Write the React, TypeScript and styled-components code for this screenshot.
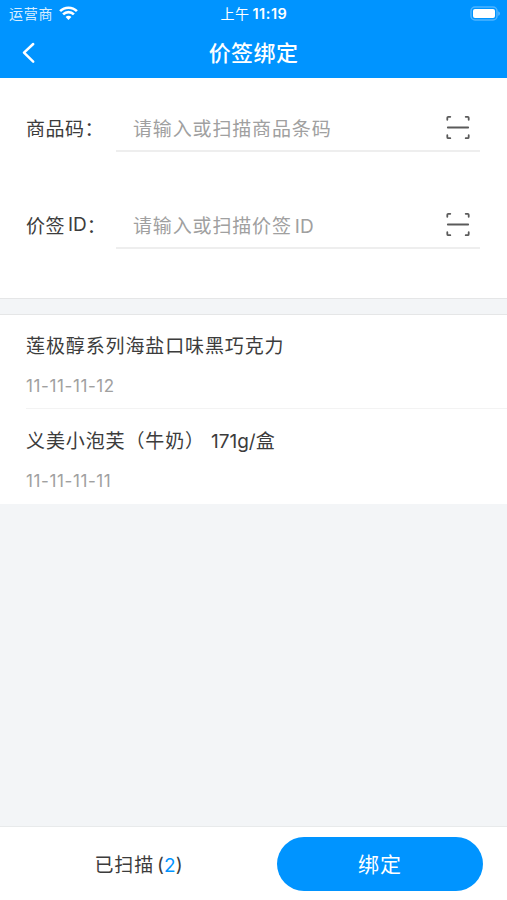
import React from "react";
import styled, { createGlobalStyle } from "styled-components";

const BLUE = "#0094ff";

const GlobalStyle = createGlobalStyle`
  * { box-sizing: border-box; }
  body {
    margin: 0;
    background: #f3f5f7;
    font-family: Inter, "Noto Sans CJK SC", sans-serif;
    color: #3c3c3c;
  }
`;

const Screen = styled.div`
  width: 507px;
  height: 900px;
  display: flex;
  flex-direction: column;
  overflow: hidden;
`;

const Header = styled.header`
  height: 78px;
  flex: none;
  background: ${BLUE};
  color: #fff;
`;

const StatusBar = styled.div`
  height: 27px;
  display: grid;
  grid-template-columns: 1fr auto 1fr;
  align-items: center;
  padding: 0 6px 0 9px;
  font-size: 14px;
  line-height: 27px;
`;

const Carrier = styled.div`
  display: flex;
  align-items: center;
  gap: 6px;
  letter-spacing: 0.8px;
  color: #d9efff;
  svg { display: block; }
`;

const Clock = styled.div`
  display: flex;
  gap: 3px;
  margin-right: 2px;
  font-size: 14px;
  font-weight: 400;
  letter-spacing: 0.4px;
`;

const ClockDigits = styled.span`
  font-size: 14.5px;
  font-weight: 600;
  letter-spacing: 0.55px;
`;

const BatterySlot = styled.div`
  display: flex;
  justify-content: flex-end;
`;

const NavBar = styled.div`
  height: 51px;
  display: grid;
  grid-template-columns: 60px 1fr 60px;
  align-items: center;
`;

const BackButton = styled.button`
  width: 40px;
  height: 40px;
  margin: 0 0 0 8px;
  padding: 0;
  display: flex;
  align-items: center;
  justify-content: center;
  border: 0;
  background: none;
  color: #fff;
`;

const Title = styled.h1`
  margin: 0;
  font-size: 22px;
  font-weight: 500;
  letter-spacing: 0.4px;
  line-height: 50px;
  text-align: center;
`;

const Form = styled.section`
  flex: none;
  height: 221px;
  padding: 25px 27px 0 26px;
  background: #fff;
  border-bottom: 1px solid #e5e6e7;
`;

const Field = styled.label`
  display: flex;
  height: 49px;
  margin-bottom: 48px;
`;

const Label = styled.span`
  width: 90px;
  display: flex;
  align-items: center;
  padding-bottom: 1px;
  font-size: 19px;
  letter-spacing: 0.5px;
  white-space: nowrap;
`;

const Colon = styled.span`
  flex: none;
`;

const LatinText = styled.span`
  margin-left: 3px;
  letter-spacing: 0;
`;

const InputRow = styled.span`
  flex: 1;
  display: flex;
  align-items: center;
  justify-content: space-between;
  padding: 0 9px 0 17px;
  border-bottom: 2px solid #eeeeee;
`;

const Placeholder = styled.span`
  padding-top: 1px;
  font-size: 19px;
  letter-spacing: 0.85px;
  color: #a0a0a0;
`;

const List = styled.section`
  flex: none;
  height: 190px;
  margin-top: 15px;
  background: #fff;
  border-top: 1px solid #e5e6e7;
`;

const Item = styled.article`
  height: 93px;
  margin-left: 26px;
  padding-top: 17px;
  & + & { padding-top: 18px; border-top: 1px solid #f3f3f3; }
`;

const ItemName = styled.div`
  font-size: 19px;
  letter-spacing: 0.88px;
  line-height: 30px;
  white-space: pre;
`;

const Weight = styled.span`
  margin-left: 6px;
  letter-spacing: 0;
`;

const ItemCode = styled.div`
  margin-top: 12px;
  font-size: 17px;
  letter-spacing: 0.6px;
  line-height: 24px;
  color: #a0a0a0;
`;

const Footer = styled.footer`
  height: 74px;
  margin-top: auto;
  padding: 0 24px 0 0;
  display: flex;
  align-items: center;
  background: #fff;
  border-top: 1px solid #e8eaeb;
`;

const Scanned = styled.div`
  flex: 1;
  padding-bottom: 1px;
  text-align: center;
  font-size: 19px;
  letter-spacing: 0.9px;
  em { margin-left: 3px; font-style: normal; letter-spacing: 0; }
  b { color: ${BLUE}; font-weight: 400; }
`;

const BindButton = styled.button`
  width: 206px;
  height: 54px;
  padding: 0 0 2px;
  border: 0;
  border-radius: 27px;
  background: ${BLUE};
  color: #fff;
  font: 400 21px Inter, "Noto Sans CJK SC", sans-serif;
  letter-spacing: 1px;
`;

const WifiIcon = () => (
  <svg width="19" height="15" viewBox="0 0 19 15" fill="none" stroke="#fff" strokeWidth="2.6">
    <path d="M1.1 5.2C5.7.5 13.3.5 17.9 5.2" />
    <path d="M4.1 8.4c3-3 7.8-3 10.8 0" />
    <path d="M6.6 10.9c1.6-1.6 4.2-1.6 5.8 0L9.5 13.9z" fill="#fff" stroke="none" />
  </svg>
);

const BatteryIcon = () => (
  <svg width="32" height="15" viewBox="0 0 32 15">
    <rect x="2" y="1" width="26" height="13" rx="4" fill="none" stroke="#4db4ff" strokeWidth="1.5" />
    <rect x="4" y="3" width="22" height="9" rx="2" fill="#fff" />
    <path d="M29.3 5.2c2 .8 2 3.8 0 4.6z" fill="#66beff" />
  </svg>
);

const BackIcon = () => (
  <svg width="14" height="22" viewBox="0 0 14 22" fill="none" stroke="currentColor" strokeWidth="2.5" strokeLinecap="round" strokeLinejoin="round">
    <path d="M12.2 2 3 10.7l9.2 8.9" />
  </svg>
);

const ScanIcon = () => (
  <svg width="26" height="26" viewBox="0 0 26 26" fill="none" stroke="#5a5a5a" strokeWidth="1.8" strokeLinecap="round" strokeLinejoin="round">
    <path d="M2.3 5.8V3.8q0-1 1-1h2M20.7 2.8h2q1 0 1 1v2M2.3 21.2v2q0 1 1 1h2M20.7 24.2h2q1 0 1-1v-2M2.8 13.5h20.4" />
  </svg>
);

export default function App() {
  return (
    <Screen>
      <GlobalStyle />
      <Header>
        <StatusBar>
          <Carrier>运营商<WifiIcon /></Carrier>
          <Clock>上午<ClockDigits>11:19</ClockDigits></Clock>
          <BatterySlot><BatteryIcon /></BatterySlot>
        </StatusBar>
        <NavBar>
          <BackButton aria-label="返回"><BackIcon /></BackButton>
          <Title>价签绑定</Title>
        </NavBar>
      </Header>
      <Form>
        <Field>
          <Label>商品码<Colon>：</Colon></Label>
          <InputRow><Placeholder>请输入或扫描商品条码</Placeholder><ScanIcon /></InputRow>
        </Field>
        <Field>
          <Label>价签<LatinText>ID</LatinText><Colon>：</Colon></Label>
          <InputRow><Placeholder>请输入或扫描价签<LatinText>ID</LatinText></Placeholder><ScanIcon /></InputRow>
        </Field>
      </Form>
      <List>
        <Item>
          <ItemName>莲极醇系列海盐口味黑巧克力</ItemName>
          <ItemCode>11-11-11-12</ItemCode>
        </Item>
        <Item>
          <ItemName>义美小泡芙（牛奶）<Weight>171g/盒</Weight></ItemName>
          <ItemCode>11-11-11-11</ItemCode>
        </Item>
      </List>
      <Footer>
        <Scanned>已扫描<em>(<b>2</b>)</em></Scanned>
        <BindButton>绑定</BindButton>
      </Footer>
    </Screen>
  );
}
